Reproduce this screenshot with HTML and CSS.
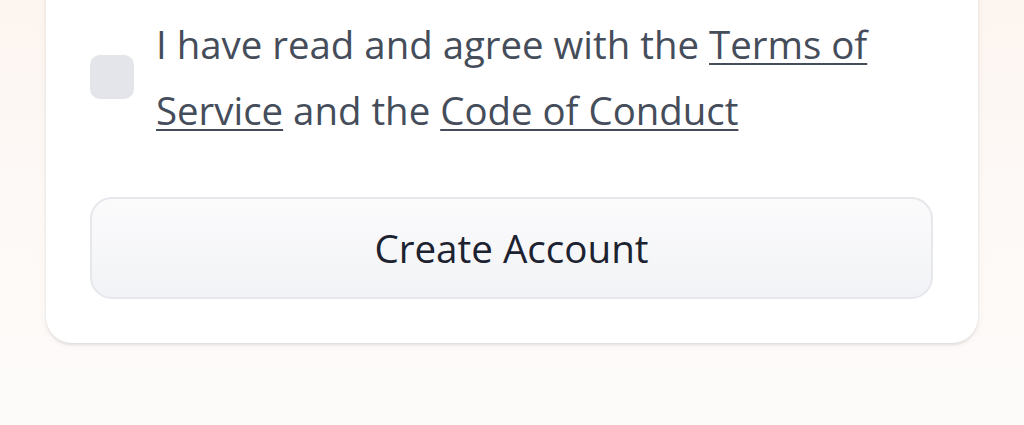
FILE: index.html
```html
<!DOCTYPE html>
<html lang="en">
<head>
    <meta charset="UTF-8">
    <meta name="viewport" content="width=device-width, initial-scale=1.0">
    <title>Sign up</title>
    <link rel="stylesheet" href="styles.css">
</head>
<body>
    <main class="page">
        <form class="card" onsubmit="return false">
            <label class="agree">
                <input type="checkbox" class="agree-box">
                <span class="agree-text">I have read and agree with the <a href="#">Terms of Service</a> and the <a href="#">Code of Conduct</a></span>
            </label>
            <button type="submit" class="submit">Create Account</button>
        </form>
    </main>
</body>
</html>
```

FILE: styles.css
```css
* {
    box-sizing: border-box;
}
body {
    margin: 0;
    height: 425px;
    overflow: hidden;
    background: linear-gradient(180deg, #fdf5f0 0%, #fdf9f6 45%, #fdfbfa 100%);
    font-family: "Open Sans", sans-serif;
}
.page {
    padding: 0 46px;
}
.card {
    margin-top: -40px;
    padding: 51px 45px 44px 44px;
    background: #fff;
    border-radius: 26px;
    box-shadow: 0 2px 3px rgba(0, 0, 0, 0.09), 0 1px 10px rgba(0, 0, 0, 0.05);
}
.agree {
    display: flex;
    align-items: center;
    gap: 22px;
}
.agree-box {
    appearance: none;
    flex: none;
    width: 44px;
    height: 44px;
    margin: 0;
    border-radius: 10px;
    background: #e3e5ea;
}
.agree-text {
    font-size: 38.4px;
    line-height: 66px;
    color: #454d5b;
}
.agree-text a {
    color: inherit;
    text-decoration: underline;
    text-decoration-thickness: 2px;
    text-underline-offset: 4px;
}
.submit {
    display: block;
    width: 100%;
    height: 102px;
    margin-top: 54px;
    border: 2px solid #e6e7eb;
    border-radius: 22px;
    background: linear-gradient(180deg, #fbfbfc 0%, #f2f3f6 100%);
    font-family: inherit;
    font-size: 38.6px;
    color: #1d2230;
    cursor: pointer;
}
```
